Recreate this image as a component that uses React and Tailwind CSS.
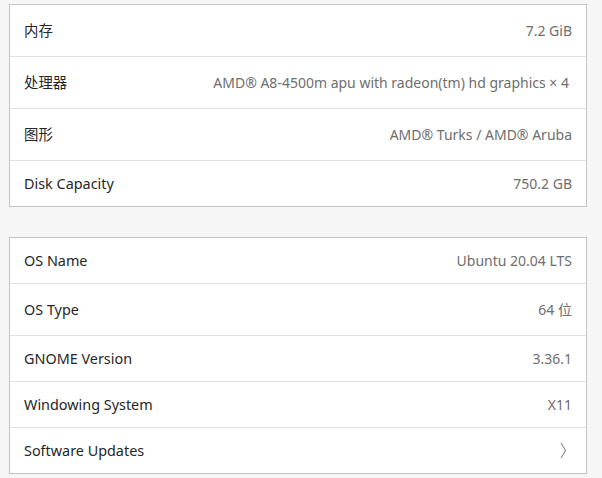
import React from "react";

const font = { fontFamily: '"Noto Sans", "Noto Sans CJK SC", sans-serif' };

function Chevron() {
  return (
    <svg width="7" height="17" viewBox="0 0 7 17" className="block">
      <polyline points="1,1 5.5,8.5 1,16" fill="none" stroke="#8a8a8a" strokeWidth="1.1" />
    </svg>
  );
}

function Row({ label, value, tall, last, chevron, valueClass = "" }) {
  const h = last ? "h-[45px]" : tall ? "h-[52px] border-b border-[#e1e1e1]" : "h-[46px] border-b border-[#e1e1e1]";
  return (
    <div className={`flex items-center justify-between pl-[14px] pr-[14px] ${h}`}>
      <span className="text-[14.4px] text-[#262626]">{label}</span>
      {chevron ? (
        <span className="pr-[5px]"><Chevron /></span>
      ) : (
        <span className={`text-[14px] text-[#6e6e6e] ${valueClass}`}>{value}</span>
      )}
    </div>
  );
}

export default function App() {
  return (
    <div className="w-[602px] h-[478px] bg-[#f6f6f6] overflow-hidden" style={font}>
      <div className="pl-[9px] pr-[15px] pt-[4px] flex flex-col gap-[30px]">
        <div className="bg-white border border-[#c3c3c3] flex flex-col">
          <Row label="内存" value="7.2 GiB" tall />
          <Row label="处理器" value="AMD® A8-4500m apu with radeon(tm) hd graphics × 4" tall valueClass="mr-[3px]" />
          <Row label="图形" value="AMD® Turks / AMD® Aruba" tall />
          <Row label="Disk Capacity" value="750.2 GB" last />
        </div>
        <div className="bg-white border border-[#c3c3c3] flex flex-col">
          <Row label="OS Name" value="Ubuntu 20.04 LTS" />
          <Row label="OS Type" value="64 位" tall />
          <Row label="GNOME Version" value="3.36.1" />
          <Row label="Windowing System" value="X11" />
          <Row label="Software Updates" chevron last />
        </div>
      </div>
    </div>
  );
}
